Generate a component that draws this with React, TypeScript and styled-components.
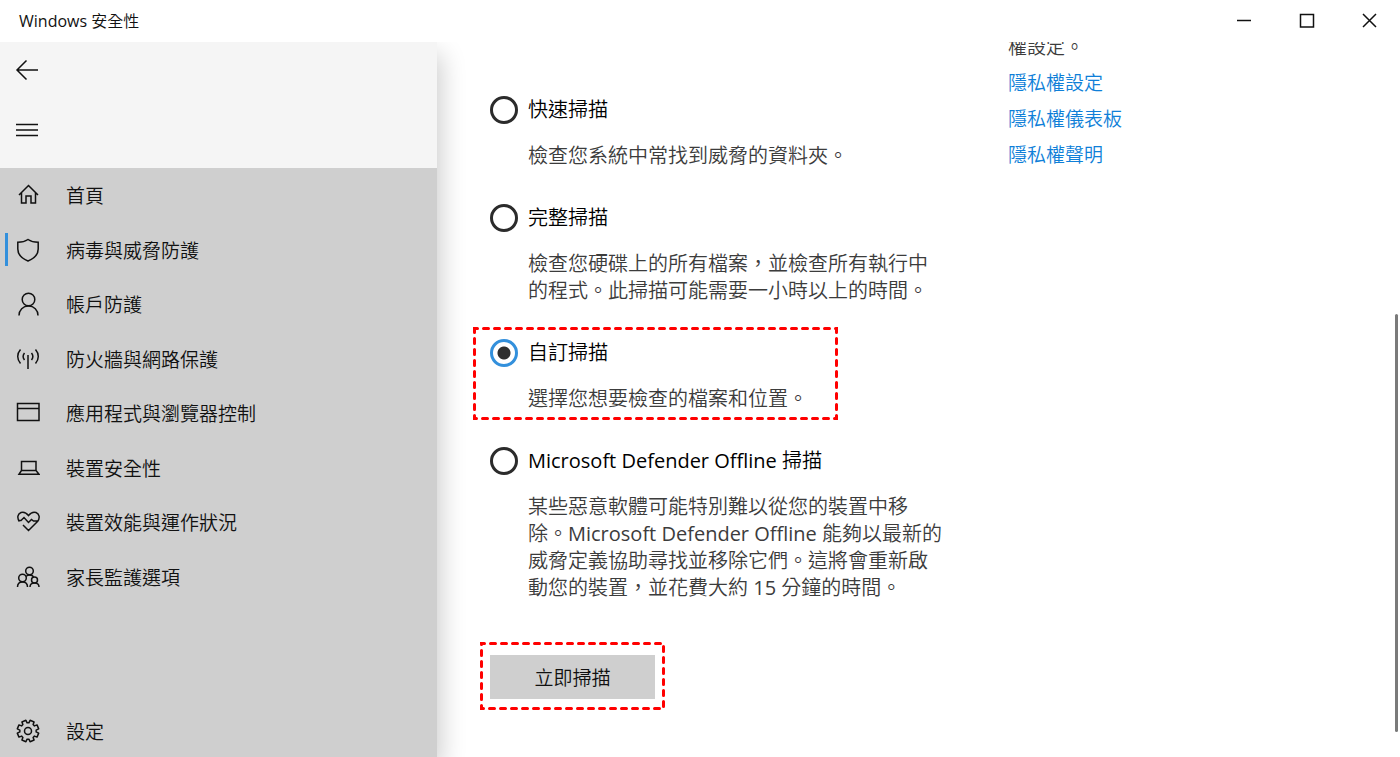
import React from "react";
import styled, { createGlobalStyle, css } from "styled-components";

const GlobalStyle = createGlobalStyle`
  *, *::before, *::after { box-sizing: border-box; }
  body {
    margin: 0;
    background: #fff;
    color: #111;
    font-family: "Open Sans", "Noto Sans CJK TC DemiLight", "Noto Sans CJK TC Light", "Noto Sans CJK TC", sans-serif;
    font-size: 19px;
    font-weight: 400;
  }
`;

const Window = styled.div`
  display: flex;
  flex-direction: column;
  height: 100vh;
  overflow: hidden;
`;

const TitleBar = styled.header`
  display: flex;
  align-items: center;
  justify-content: space-between;
  flex: none;
  height: 42px;
  padding-left: 19px;
`;

const Title = styled.h1`
  margin: 0;
  font-size: 16px;
  font-weight: 400;
  line-height: 24px;
`;

const WindowControls = styled.div`
  display: flex;
`;

const IconButton = styled.button<{ $width: number; $height: number }>`
  display: flex;
  align-items: center;
  justify-content: center;
  width: ${(p) => p.$width}px;
  height: ${(p) => p.$height}px;
  padding: 0;
  border: 0;
  background: none;
  color: #111;
`;

const Body = styled.div`
  display: flex;
  flex: 1;
  min-height: 0;
  overflow: hidden;
`;

const Sidebar = styled.aside`
  display: flex;
  flex-direction: column;
  flex: none;
  width: 437px;
  background: #cfcfcf;
  box-shadow: 4px 12px 24px rgba(0, 0, 0, 0.2);
`;

const SidebarTop = styled.div`
  display: flex;
  flex-direction: column;
  gap: 5px;
  height: 126px;
  background: #f5f5f5;
`;

const Nav = styled.nav`
  display: flex;
  flex-direction: column;
  justify-content: space-between;
  flex: 1;
  padding-top: 1px;
`;

const NavList = styled.ul`
  display: grid;
  grid-auto-rows: 1fr;
  height: 436px;
  margin: 0;
  padding: 0;
  list-style: none;
`;

const NavLink = styled.a<{ $active?: boolean }>`
  display: flex;
  align-items: center;
  gap: 26px;
  height: 52px;
  padding-left: 16px;
  color: #111;
  text-decoration: none;
  ${(p) =>
    p.$active &&
    css`
      background: linear-gradient(#3390dc, #3390dc) 5px center / 3px 33px no-repeat;
    `}
`;

const Icon = styled.svg`
  flex: none;
  width: 24px;
  height: 24px;
  fill: none;
  stroke: #111;
  stroke-width: 1.5;
`;

const Main = styled.main`
  display: flex;
  flex: 1;
  gap: 60px;
  min-width: 0;
  padding-left: 53px;
`;

const ScanForm = styled.form`
  display: flex;
  flex-direction: column;
  flex: none;
  align-items: flex-start;
  gap: 54px;
  width: 458px;
  padding-top: 54px;
`;

const Options = styled.div`
  display: flex;
  flex-direction: column;
  gap: 35px;
`;

const Option = styled.div`
  position: relative;
  display: grid;
  grid-template-columns: 28px 416px;
  column-gap: 10px;
  row-gap: 18px;
`;

const Radio = styled.input`
  appearance: none;
  width: 28px;
  height: 28px;
  margin: 0;
  border: 3px solid #2b2b2b;
  border-radius: 50%;
  &:checked {
    border-color: #3390dc;
    background: radial-gradient(circle, #2f2f2f 6px, #fff 7px);
  }
`;

const OptionName = styled.label`
  color: #000;
  font-size: 20px;
  line-height: 28px;
`;

const Description = styled.p`
  grid-column: 2;
  margin: 0;
  color: #3c3c3c;
  font-size: 20px;
  line-height: 27px;
`;

const ButtonFrame = styled.div`
  position: relative;
`;

const ScanButton = styled.button`
  width: 165px;
  height: 44px;
  padding: 0;
  border: 0;
  background: #cfcfcf;
  color: #111;
  font: inherit;
`;

const HighlightBox = styled.svg<{ $top: number; $left: number; $width: number; $height: number }>`
  position: absolute;
  top: ${(p) => p.$top}px;
  left: ${(p) => p.$left}px;
  width: ${(p) => p.$width}px;
  height: ${(p) => p.$height}px;
  fill: none;
  stroke: #ff0000;
  stroke-width: 3;
  stroke-linecap: round;
  pointer-events: none;
`;

const Links = styled.section`
  display: flex;
  flex-direction: column;
  align-items: flex-start;
  flex: 1;
  gap: 9px;
  margin-top: -8px;
`;

const LinksText = styled.p`
  margin: 0;
  color: #3c3c3c;
  line-height: 27px;
`;

const PrivacyLink = styled.a`
  color: #0f7fd8;
  line-height: 27px;
  text-decoration: none;
`;

const ScrollTrack = styled.div`
  flex: none;
  width: 5px;
`;

const ScrollThumb = styled.div`
  width: 3px;
  height: calc(58% + 3px);
  margin-top: 272px;
  border-radius: 2px;
  background: #7a7a7a;
`;

const icons = {
  home: <path d="M3 12 12.5 2.5 22 12M5.500 10v10h4.500v-7h5v7h4.500V10" />,
  shield: <path d="M12 1.5C9 3.6 5.500 4.300 1.800 4.300V11c0 6 4 9.500 10.200 12 6.200-2.500 10.200-6 10.200-12V4.300C18.500 4.300 15 3.600 12 1.500z" />,
  person: (
    <>
      <circle cx="12.500" cy="7.500" r="6.300" />
      <path d="M3 23.500c0-5.500 4-9.500 9.500-9.500s9.500 4 9.500 9.500" />
    </>
  ),
  signal: (
    <path d="M12 8v14M8.500 6c-1.800 2.300-1.800 4.700 0 7M15.500 6c1.800 2.300 1.800 4.700 0 7M4.500 2.500c-3.700 4.200-3.700 9.800 0 14M19.500 2.500c3.700 4.200 3.700 9.800 0 14" />
  ),
  app: <path d="M1.500 2.500h21.500v17h-21.500zM1.500 7.500h21.500" />,
  laptop: <path d="M5.500 5.500h14.500v9h-14.500zM5.500 14.500 3 18.200h20L20 14.500" />,
  heart: (
    <path d="M3.500 11.500C.8 8 1.500 3.800 5 2.500c3-1 5.500.5 7.500 3 2-2.500 4.500-4 7.500-3 3.500 1.300 4.200 5.500 1.500 9L12.500 20.500 7 15M2 10.500h3l3-3 4.500 5 3-3 2 1.500h5" />
  ),
  family: (
    <>
      <circle cx="13.500" cy="6" r="3.800" />
      <circle cx="6.500" cy="13" r="3.800" />
      <circle cx="18.500" cy="15" r="3" />
      <path d="M1.500 22c0-3 2-5 5-5s5 2 5 5M13.500 10c-1.500 0-2.500.5-3.500 1.500M13.500 10c2 0 3.500.8 4 2M14 22c0-2.500 2-4 4.500-4s4.500 1.500 4.500 4" />
    </>
  ),
};

const gearPath = (() => {
  const teeth = 8;
  const points: string[] = [];
  for (let i = 0; i < teeth; i += 1) {
    [
      [-0.28, 8.2],
      [-0.2, 10.9],
      [0.2, 10.9],
      [0.28, 8.2],
    ].forEach(([offset, radius]) => {
      const angle = ((i + 0.5) * Math.PI * 2) / teeth + offset;
      points.push(`${(12 + radius * Math.cos(angle)).toFixed(2)} ${(12 + radius * Math.sin(angle)).toFixed(2)}`);
    });
  }
  return `M${points.join("L")}Z`;
})();

const navItems: { icon: keyof typeof icons; label: string; active?: boolean }[] = [
  { icon: "home", label: "首頁" },
  { icon: "shield", label: "病毒與威脅防護", active: true },
  { icon: "person", label: "帳戶防護" },
  { icon: "signal", label: "防火牆與網路保護" },
  { icon: "app", label: "應用程式與瀏覽器控制" },
  { icon: "laptop", label: "裝置安全性" },
  { icon: "heart", label: "裝置效能與運作狀況" },
  { icon: "family", label: "家長監護選項" },
];

const scanOptions = [
  { id: "quick", name: "快速掃描", text: "檢查您系統中常找到威脅的資料夾。" },
  {
    id: "full",
    name: "完整掃描",
    text: "檢查您硬碟上的所有檔案，並檢查所有執行中的程式。此掃描可能需要一小時以上的時間。",
  },
  { id: "custom", name: "自訂掃描", text: "選擇您想要檢查的檔案和位置。" },
  {
    id: "offline",
    name: "Microsoft Defender Offline 掃描",
    text: "某些惡意軟體可能特別難以從您的裝置中移除。Microsoft Defender Offline 能夠以最新的威脅定義協助尋找並移除它們。這將會重新啟動您的裝置，並花費大約 15 分鐘的時間。",
  },
];

function Highlight({ top, left, width, height }: { top: number; left: number; width: number; height: number }) {
  return (
    <HighlightBox $top={top} $left={left} $width={width} $height={height} aria-hidden="true">
      <rect x="1.5" y="1.5" width={width - 3} height={height - 3} strokeDasharray="5 6" strokeDashoffset="2" />
    </HighlightBox>
  );
}

export default function App() {
  return (
    <>
      <GlobalStyle />
      <Window>
        <TitleBar>
          <Title>Windows 安全性</Title>
          <WindowControls>
            <IconButton $width={63} $height={40} aria-label="最小化">
              <Icon viewBox="0 0 24 24"><path d="M5 11.500h14" /></Icon>
            </IconButton>
            <IconButton $width={63} $height={40} aria-label="最大化">
              <Icon viewBox="0 0 24 24"><path d="M5.500 5.500h13v12.500h-13z" /></Icon>
            </IconButton>
            <IconButton $width={62} $height={40} aria-label="關閉">
              <Icon viewBox="0 0 24 24"><path d="m6 5 13 13M19 5 6 18" /></Icon>
            </IconButton>
          </WindowControls>
        </TitleBar>
        <Body>
          <Sidebar>
            <SidebarTop>
              <IconButton $width={54} $height={55} aria-label="返回">
                <Icon viewBox="0 0 24 24"><path d="M23 12H2M11.500 2.500 2 12l9.500 9.500" /></Icon>
              </IconButton>
              <IconButton $width={54} $height={55} aria-label="功能表">
                <Icon viewBox="0 0 24 24"><path d="M1 6.500h22M1 12h22M1 17.500h22" /></Icon>
              </IconButton>
            </SidebarTop>
            <Nav>
              <NavList>
                {navItems.map((item) => (
                  <li key={item.icon}>
                    <NavLink href="#" $active={item.active}>
                      <Icon viewBox="0 0 24 24">{icons[item.icon]}</Icon>
                      {item.label}
                    </NavLink>
                  </li>
                ))}
              </NavList>
              <NavLink href="#">
                <Icon viewBox="0 0 24 24">
                  <path d={gearPath} strokeLinejoin="round" />
                  <circle cx="12" cy="12" r="3.500" />
                </Icon>
                設定
              </NavLink>
            </Nav>
          </Sidebar>
          <Main>
            <ScanForm onSubmit={(event) => event.preventDefault()}>
              <Options>
                {scanOptions.map((option) => (
                  <Option key={option.id}>
                    <Radio type="radio" name="scan" id={option.id} defaultChecked={option.id === "custom"} />
                    <OptionName htmlFor={option.id}>{option.name}</OptionName>
                    <Description>{option.text}</Description>
                    {option.id === "custom" && <Highlight top={-12} left={-17} width={365} height={93} />}
                  </Option>
                ))}
              </Options>
              <ButtonFrame>
                <ScanButton type="submit">立即掃描</ScanButton>
                <Highlight top={-13} left={-10} width={185} height={68} />
              </ButtonFrame>
            </ScanForm>
            <Links>
              <LinksText>權設定。</LinksText>
              <PrivacyLink href="#">隱私權設定</PrivacyLink>
              <PrivacyLink href="#">隱私權儀表板</PrivacyLink>
              <PrivacyLink href="#">隱私權聲明</PrivacyLink>
            </Links>
          </Main>
          <ScrollTrack>
            <ScrollThumb />
          </ScrollTrack>
        </Body>
      </Window>
    </>
  );
}
